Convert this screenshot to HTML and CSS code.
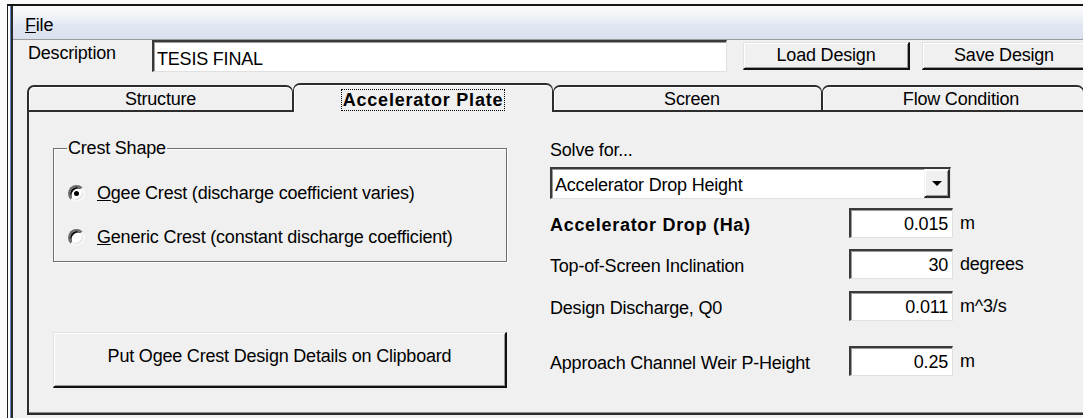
FILE: index.html
```html
<!DOCTYPE html>
<html lang="en">
<head>
<meta charset="utf-8">
<title>Accelerator Plate</title>
<link rel="stylesheet" href="styles.css">
</head>
<body>
<div class="window">
  <div class="menubar"><span class="menu-item"><u>F</u>ile</span></div>

  <div class="desc-row">
    <label class="desc-label">Description</label>
    <div class="field desc-field">TESIS FINAL</div>
    <button class="btn btn-load">Load Design</button>
    <button class="btn btn-save">Save Design</button>
  </div>

  <div class="tabs">
    <div class="tab tab-structure">Structure</div>
    <div class="tab tab-active"><span class="focus">Accelerator Plate</span></div>
    <div class="tab tab-screen">Screen</div>
    <div class="tab tab-flow">Flow Condition</div>
  </div>

  <div class="panel">
    <div class="col-left">
      <fieldset class="group">
        <legend>Crest Shape</legend>
        <div class="radio-row">
          <span class="radio checked"></span>
          <span><u>O</u>gee Crest (discharge coefficient varies)</span>
        </div>
        <div class="radio-row second">
          <span class="radio"></span>
          <span><u>G</u>eneric Crest (constant discharge coefficient)</span>
        </div>
      </fieldset>
      <button class="btn btn-clip">Put Ogee Crest Design Details on Clipboard</button>
    </div>

    <div class="col-right">
      <div class="solve-label">Solve for...</div>
      <div class="field combo">
        <span class="combo-text">Accelerator Drop Height</span>
        <span class="combo-btn"><span class="arrow"></span></span>
      </div>

      <div class="param row-1">
        <span class="param-label bold">Accelerator Drop (Ha)</span>
        <span class="field value">0.015</span>
        <span class="unit">m</span>
      </div>
      <div class="param row-2">
        <span class="param-label">Top-of-Screen Inclination</span>
        <span class="field value">30</span>
        <span class="unit">degrees</span>
      </div>
      <div class="param row-3">
        <span class="param-label">Design Discharge, Q0</span>
        <span class="field value">0.011</span>
        <span class="unit">m^3/s</span>
      </div>
      <div class="param row-4">
        <span class="param-label">Approach Channel Weir P-Height</span>
        <span class="field value">0.25</span>
        <span class="unit">m</span>
      </div>
    </div>
  </div>
</div>
</body>
</html>
```

FILE: styles.css
```css
* {
  box-sizing: border-box;
}

html,
body {
  margin: 0;
  height: 100%;
}

body {
  background: #fafafa;
  overflow: hidden;
  font-family: "Liberation Sans", Arial, sans-serif;
  font-size: 18px;
  letter-spacing: -0.2px;
  color: #000;
}

/* Window frame with the double left edge */
.window {
  margin: 4px 0 0 7px;
  width: 1100px;
  height: 430px;
  background: #f0f0f0;
  border-top: 2px solid #151515;
  border-left: 1px solid #1e1e1e;
  padding-left: 5px;
  box-shadow: inset 2px 0 #fdfdfd, inset 3px 0 #5d82b8, inset 5px 0 #2b2b2b;
}

/* Menu bar */
.menubar {
  height: 34px;
  padding: 5px 0 0 12px;
  line-height: 28px;
  background: linear-gradient(to bottom, #f9fafc 0%, #f2f4f8 28%, #e0e6f1 60%, #dae1ee 100%);
  border-bottom: 1px solid #9b9b9b;
}

/* Description row */
.desc-row {
  display: flex;
  height: 33px;
}

.desc-label {
  width: 139px;
  padding-left: 15px;
  line-height: 27px;
}

.field {
  background: #fff;
  border-style: solid;
  border-width: 2px 1px 1px 2px;
  border-color: #3a3a3a #e0e0e0 #e0e0e0 #3a3a3a;
  box-shadow: inset 1px 1px #9a9a9a;
}

.desc-field {
  width: 575px;
  height: 32px;
  padding: 7px 3px 0;
  line-height: 20px;
}

.btn {
  font: inherit;
  letter-spacing: inherit;
  color: #000;
  background: #f0f0f0;
  border-style: solid;
  border-width: 1px 2px 2px 1px;
  border-color: #e2e2e2 #111 #111 #e2e2e2;
  box-shadow: inset 1px 1px #fff, inset -1px -1px #9a9a9a;
  padding: 0;
}

.btn-load {
  margin: 2px 0 0 16px;
  width: 167px;
  height: 28px;
}

.btn-save {
  margin: 2px 0 0 12px;
  width: 165px;
  height: 28px;
}

/* Tab strip */
.tabs {
  display: flex;
  align-items: flex-end;
  height: 29px;
  margin: 10px 0 0 14px;
}

.tab {
  height: 27px;
  border: 1px solid #2d2d2d;
  border-top-width: 2px;
  border-bottom-width: 2px;
  border-radius: 7px 7px 0 0;
  text-align: center;
  line-height: 22px;
  padding-top: 1px;
  background: #f0f0f0;
  box-shadow: inset 0 1px #fff, inset 1px 0 #fff;
}

.tab-structure {
  width: 266px;
  border-left-width: 2px;
}

.tab-active {
  width: 260px;
  height: 29px;
  border-bottom: none;
  font-weight: bold;
  letter-spacing: 0.8px;
  padding-top: 4px;
}

.tab-screen {
  width: 269px;
  padding-left: 9px;
}

.tab-flow {
  width: 262px;
  padding-left: 16px;
}

.focus {
  display: inline-block;
  border: 1px dotted #000;
  line-height: 20px;
  padding: 0 1px;
}

/* Tab page */
.panel {
  display: flex;
  height: 303px;
  margin-left: 14px;
  padding-left: 24px;
  border-left: 2px solid #2d2d2d;
  border-bottom: 2px solid #2a2a2a;
  box-shadow: inset 0 -1px #8c8c8c;
}

.col-left {
  display: flex;
  flex-direction: column;
  align-items: flex-start;
  width: 454px;
}

.group {
  margin: 28px 0 0;
  width: 454px;
  height: 122px;
  min-width: 0;
  padding: 25px 0 0 14px;
  border: 1px solid #6f6f6f;
  box-shadow: 1px 1px #fff, inset 1px 1px #fff;
}

.group legend {
  margin-left: -1px;
  padding: 0 1px;
  line-height: 16px;
}

.radio-row {
  display: flex;
  align-items: center;
  gap: 12px;
  height: 24px;
}

.radio-row.second {
  margin-top: 20px;
}

/* Classic sunken radio: dark upper-left arc, light lower-right arc */
.radio {
  position: relative;
  flex: none;
  width: 17px;
  height: 17px;
  border-radius: 50%;
  border: 2px solid;
  border-color: #6a6a6a #f8f8f8 #f8f8f8 #6a6a6a;
  background: #fff;
  box-shadow: inset 2px 2px 0 -0.5px #111, inset -1px -1px #dcdcdc;
  transform: rotate(0deg);
}

.radio.checked::after {
  content: "";
  position: absolute;
  left: 4px;
  top: 4px;
  width: 5px;
  height: 5px;
  border-radius: 50%;
  background: #000;
}

.btn-clip {
  margin-top: 70px;
  width: 454px;
  height: 56px;
  padding-bottom: 7px;
}

/* Right-hand parameters */
.col-right {
  margin-left: 43px;
  flex: 1;
}

.solve-label {
  margin-top: 28px;
  line-height: 20px;
}

.combo {
  display: flex;
  margin-top: 7px;
  width: 401px;
  height: 32px;
}

.combo-text {
  padding: 6px 0 0 3px;
  line-height: 20px;
}

.combo-btn {
  display: flex;
  align-items: center;
  justify-content: center;
  margin-left: auto;
  width: 26px;
  height: 29px;
  background: #f0f0f0;
  border-style: solid;
  border-width: 1px 2px 2px 1px;
  border-color: #f4f4f4 #2a2a2a #2a2a2a #f4f4f4;
  box-shadow: inset 1px 1px #fff, inset -1px -1px #999;
}

.arrow {
  width: 0;
  height: 0;
  border-left: 5px solid transparent;
  border-right: 5px solid transparent;
  border-top: 5px solid #000;
}

.param {
  display: flex;
  align-items: center;
  height: 30px;
}

.row-1 { margin-top: 9px; }
.row-2 { margin-top: 11px; }
.row-3 { margin-top: 12px; }
.row-4 { margin-top: 25px; }

.param-label {
  width: 299px;
  padding-top: 5px;
}

.bold {
  font-weight: bold;
  letter-spacing: 0.7px;
}

.value {
  width: 104px;
  height: 30px;
  text-align: right;
  padding: 2px 4px 0 0;
  line-height: 25px;
}

.unit {
  margin-left: 7px;
}
```
